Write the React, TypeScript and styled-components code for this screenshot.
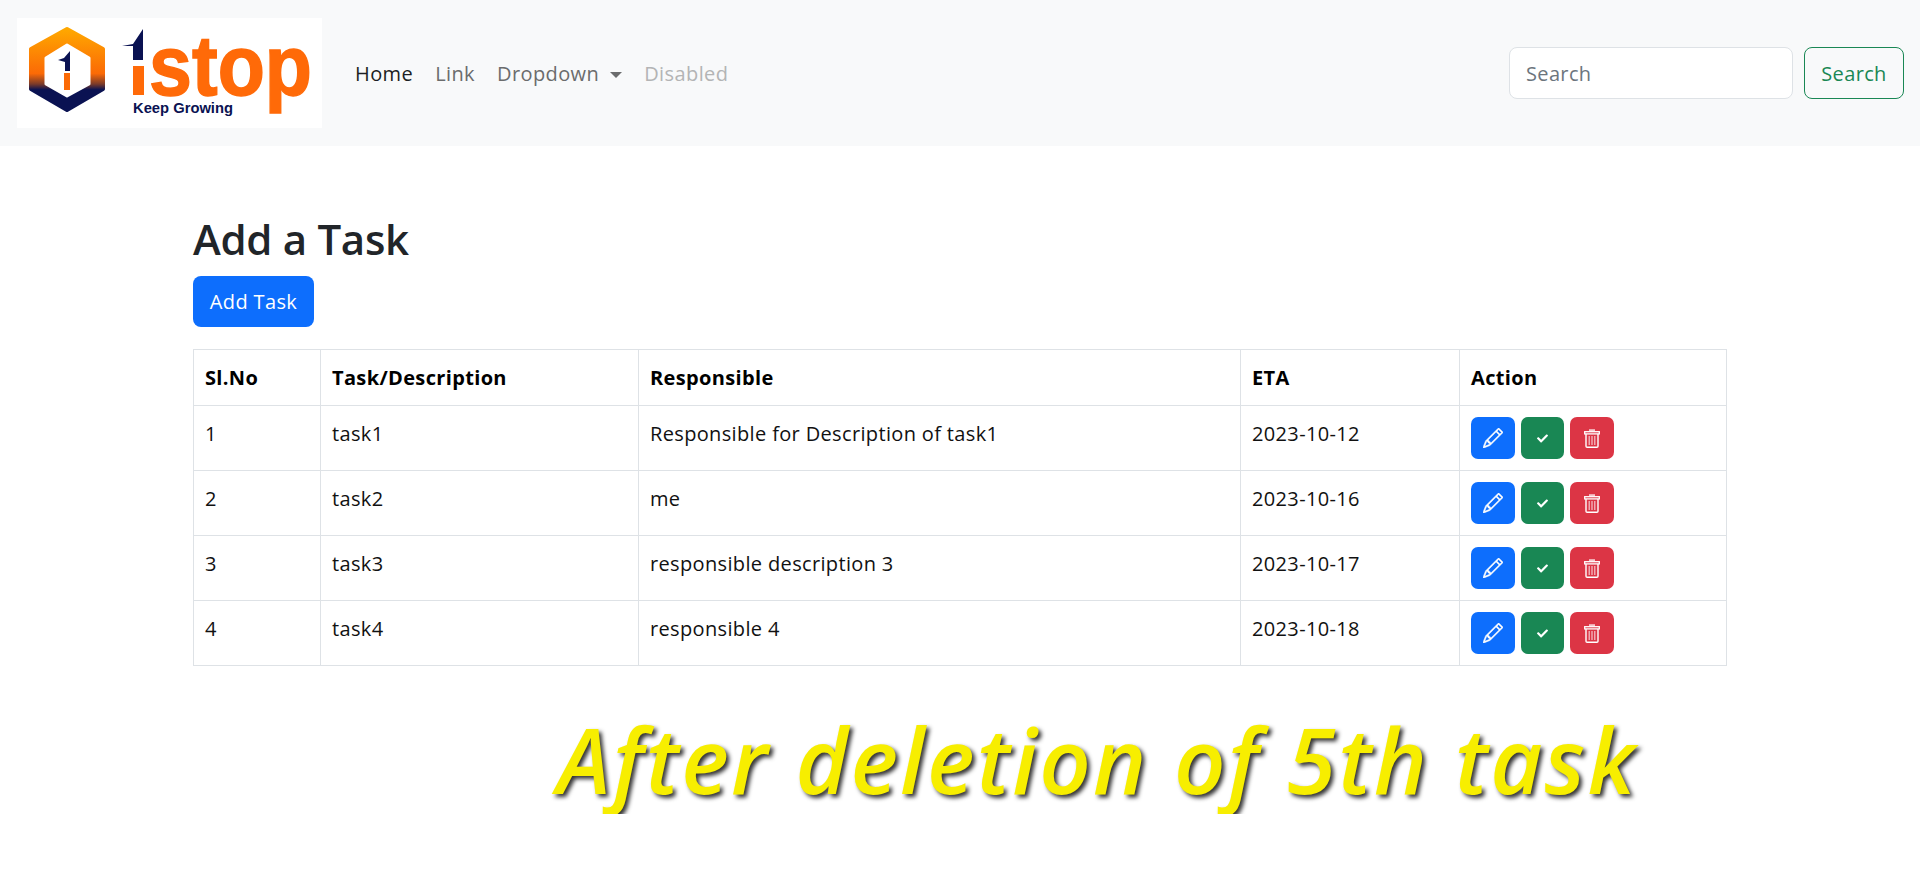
import React from "react";
import styled, { createGlobalStyle } from "styled-components";
import { BsPencil } from "react-icons/bs";
import { FaCheck } from "react-icons/fa";

const GlobalStyle = createGlobalStyle`
  html, body {
    margin: 0;
    padding: 0;
    background: #fff;
    color: #212529;
    font-family: "Open Sans", "Noto Sans", sans-serif;
  }
  * { box-sizing: border-box; }
`;

const Navbar = styled.nav`
  display: flex;
  align-items: center;
  height: 146px;
  padding: 0 16px 0 17px;
  background: #f8f9fa;
`;

const NavList = styled.ul`
  display: flex;
  align-items: center;
  gap: 22px;
  margin: 0 0 0 33px;
  padding: 0;
  list-style: none;
  flex: 1;
`;

const NavLink = styled.a<{ $state?: "active" | "disabled" }>`
  font-size: 20px;
  letter-spacing: 0.4px;
  color: ${(p) =>
    p.$state === "active" ? "#1c1f23" : p.$state === "disabled" ? "#b3b4b5" : "#6b6c6d"};
`;

const Caret = styled.span`
  display: inline-block;
  margin-left: 11px;
  vertical-align: 3px;
  border-top: 6px solid #6b6c6d;
  border-left: 6px solid transparent;
  border-right: 6px solid transparent;
`;

const SearchForm = styled.form`
  display: flex;
  gap: 11px;
`;

const SearchInput = styled.input`
  width: 284px;
  height: 52px;
  padding: 0 16px;
  font: inherit;
  font-size: 20px;
  letter-spacing: 0.35px;
  background: #fff;
  border: 1px solid #dee2e6;
  border-radius: 8px;
  outline: none;
  &::placeholder { color: #6c757d; opacity: 1; }
`;

const SearchButton = styled.button`
  width: 100px;
  height: 52px;
  padding: 0;
  font: inherit;
  font-size: 20px;
  letter-spacing: 0.35px;
  color: #198754;
  background: transparent;
  border: 1px solid #198754;
  border-radius: 8px;
`;

const Container = styled.main`
  width: 1534px;
  margin: 0 0 0 193px;
  padding-top: 64px;
`;

const Title = styled.h1`
  margin: 0 0 8px;
  font-size: 42px;
  line-height: 58px;
  font-weight: 600;
  letter-spacing: -0.3px;
`;

const AddButton = styled.button`
  display: block;
  width: 121px;
  height: 51px;
  padding: 0;
  font: inherit;
  font-size: 20px;
  letter-spacing: 0.35px;
  color: #fff;
  background: #0d6efd;
  border: none;
  border-radius: 8px;
`;

const Table = styled.table`
  width: 1533px;
  margin-top: 22px;
  border-collapse: collapse;
  table-layout: fixed;
  font-size: 20px;
  letter-spacing: 0.35px;
  color: #111;
  & th, & td {
    padding: 0 11px;
    border: 1px solid #dee2e6;
    text-align: left;
  }
  & th {
    height: 56px;
    font-weight: 700;
    color: #000;
  }
  & td {
    height: 65px;
    padding-top: 14px;
    vertical-align: top;
  }
  & td:last-child { padding-top: 11px; }
`;

const Actions = styled.div`
  display: flex;
  gap: 6px;
`;

const IconButton = styled.button<{ $color: string }>`
  display: flex;
  align-items: center;
  justify-content: center;
  width: 43.5px;
  height: 42px;
  padding: 0;
  color: #fff;
  background: ${(p) => p.$color};
  border: none;
  border-radius: 7px;
`;

const PencilIcon = styled(BsPencil)`
  stroke: currentColor;
  stroke-width: 0.4px;
`;

const Caption = styled.div`
  margin: 38px 0 0 557px;
  font-size: 90px;
  line-height: 110px;
  font-style: italic;
  font-weight: 600;
  letter-spacing: 2.2px;
  white-space: nowrap;
  color: #f7ee00;
  text-shadow: 3px 3px 4px #333;
`;

const LogoSvg = styled.svg`
  display: block;
  flex: none;
  overflow: visible;
`;

const Logo = () => (
  <LogoSvg width="305" height="110" viewBox="0 0 305 110">
    <defs>
      <linearGradient id="hex" x1="0" y1="0" x2="0" y2="1">
        <stop offset="0" stopColor="#ffa800" />
        <stop offset="0.55" stopColor="#fb6a06" />
        <stop offset="0.68" stopColor="#7a3a2a" />
        <stop offset="0.75" stopColor="#0a1252" />
        <stop offset="1" stopColor="#0a1252" />
      </linearGradient>
    </defs>
    <rect width="305" height="110" fill="#fff" />
    <path
      d="M50 11 L86 31 V71 L50 92 L14 71 V31 Z"
      fill="url(#hex)"
      stroke="url(#hex)"
      strokeWidth="4"
      strokeLinejoin="round"
    />
    <path d="M50 27 L72 40 V66 L50 78 L29 66 V40 Z" fill="#fff" stroke="#fff" strokeWidth="3" strokeLinejoin="round" />
    <path d="M41 42 L47 40 L53 33 V53 H48 V44 Z" fill="#0a1252" />
    <rect x="47" y="55" width="6" height="17" fill="#fb6a06" />
    <path d="M105 28 L116 26 L126 11 V42 H116 V28 Z" fill="#0a1252" />
    <rect x="116" y="48" width="11" height="29" fill="#ff6a08" />
    <text x="132" y="77" fontFamily="Liberation Sans" fontWeight="700" fontSize="86" fill="#ff6a08" stroke="#ff6a08" strokeWidth="1.5" textLength="163" lengthAdjust="spacingAndGlyphs">
      stop
    </text>
    <text x="116" y="95" fontFamily="Liberation Sans" fontWeight="700" fontSize="15" fill="#0a1252" textLength="100" lengthAdjust="spacingAndGlyphs">
      Keep Growing
    </text>
  </LogoSvg>
);

const TrashIcon = () => (
  <svg width="16" height="19" viewBox="0 0 16 19" fill="none" stroke="#fff">
    <path d="M5 1.2 H11" stroke="#f6c6cb" strokeWidth="2" />
    <rect x="0.7" y="2.7" width="14.6" height="2.2" strokeWidth="1.3" />
    <path d="M2 5 V17.2 Q2 18.3 3.1 18.3 H12.9 Q14 18.3 14 17.2 V5" strokeWidth="1.4" />
    <path d="M5.2 7 V16 M8 7 V16 M10.8 7 V16" stroke="#f6c6cb" strokeWidth="1.2" />
  </svg>
);

const tasks = [
  { no: 1, name: "task1", who: "Responsible for Description of task1", eta: "2023-10-12" },
  { no: 2, name: "task2", who: "me", eta: "2023-10-16" },
  { no: 3, name: "task3", who: "responsible description 3", eta: "2023-10-17" },
  { no: 4, name: "task4", who: "responsible 4", eta: "2023-10-18" },
];

const App: React.FC = () => {
  return (
    <>
      <GlobalStyle />
      <Navbar>
        <Logo />
        <NavList>
          <li><NavLink $state="active">Home</NavLink></li>
          <li><NavLink>Link</NavLink></li>
          <li><NavLink>Dropdown<Caret /></NavLink></li>
          <li><NavLink $state="disabled">Disabled</NavLink></li>
        </NavList>
        <SearchForm onSubmit={(e) => e.preventDefault()}>
          <SearchInput placeholder="Search" />
          <SearchButton>Search</SearchButton>
        </SearchForm>
      </Navbar>
      <Container>
        <Title>Add a Task</Title>
        <AddButton>Add Task</AddButton>
        <Table>
          <colgroup>
            <col width="127" />
            <col width="318" />
            <col width="602" />
            <col width="219" />
            <col width="267" />
          </colgroup>
          <thead>
            <tr>
              <th>Sl.No</th>
              <th>Task/Description</th>
              <th>Responsible</th>
              <th>ETA</th>
              <th>Action</th>
            </tr>
          </thead>
          <tbody>
            {tasks.map((t) => (
              <tr key={t.no}>
                <td>{t.no}</td>
                <td>{t.name}</td>
                <td>{t.who}</td>
                <td>{t.eta}</td>
                <td>
                  <Actions>
                    <IconButton $color="#0d6efd"><PencilIcon size={20} /></IconButton>
                    <IconButton $color="#198754"><FaCheck size={11} /></IconButton>
                    <IconButton $color="#dc3545"><TrashIcon /></IconButton>
                  </Actions>
                </td>
              </tr>
            ))}
          </tbody>
        </Table>
      </Container>
      <Caption>After deletion of 5th task</Caption>
    </>
  );
};

export default App;
